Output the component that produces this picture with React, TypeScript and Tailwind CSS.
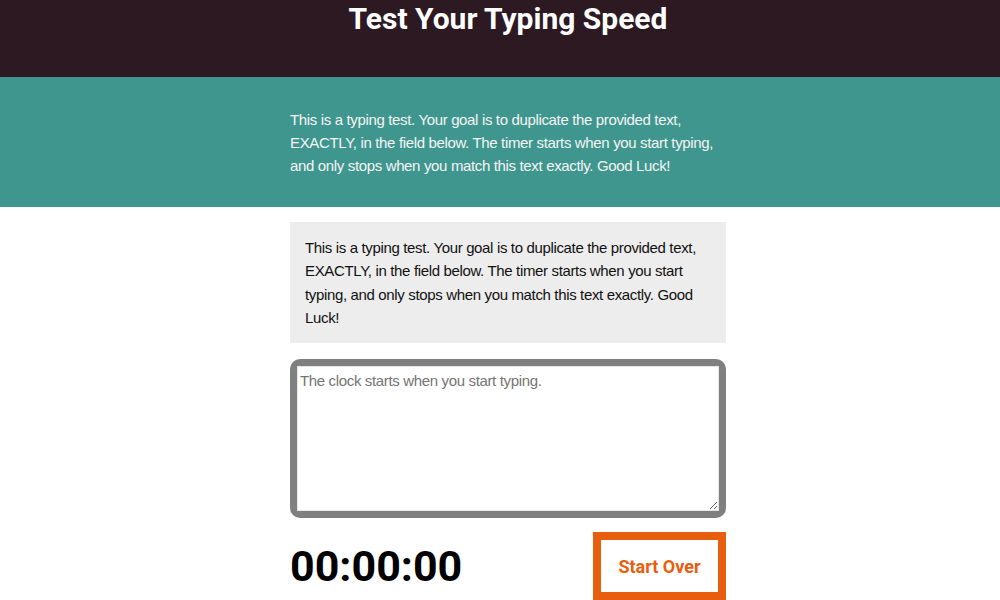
import React, { useState } from 'react';

const PROMPT =
  'This is a typing test. Your goal is to duplicate the provided text, EXACTLY, in the field below. The timer starts when you start typing, and only stops when you match this text exactly. Good Luck!';

const App: React.FC = () => {
  const [value, setValue] = useState('');

  return (
    <div className="min-h-screen bg-white font-[family-name:'Liberation_Sans',Arial,sans-serif] text-[15px] tracking-[-0.35px]">
      {/* Header */}
      <header className="h-[77px] bg-[#2d1922] pl-[16px]">
        <h1 className="pt-[1px] text-center font-[family-name:Roboto,sans-serif] text-[30px] font-bold leading-[36px] tracking-normal text-white">
          Test Your Typing Speed
        </h1>
      </header>

      {/* Intro band */}
      <section className="bg-[#3f968e] py-[30.5px] pl-[16px]">
        <p className="mx-auto w-[436px] leading-[23px] text-[#f4f4f4]">{PROMPT}</p>
      </section>

      <div className="pl-[16px]">
        <main className="mx-auto w-[436px] pt-[15px]">
          <div className="bg-[#ededed] px-[15px] py-[14px] leading-[23.3px] text-[#111]">{PROMPT}</div>

          <div className="mt-[16px] rounded-[10px] bg-[#7f7f7f] p-[7px]">
            <textarea
              value={value}
              onChange={(e) => setValue(e.target.value)}
              placeholder="The clock starts when you start typing."
              className="block h-[145px] w-full resize-y border border-[#e6e6e6] bg-white px-[2px] py-[4px] leading-[20px] text-black outline-none placeholder:text-[#757575]"
            />
          </div>

          <div className="mt-[14px] flex items-center justify-between">
            <div className="font-[family-name:Roboto,sans-serif] text-[43px] font-bold leading-none tracking-normal text-black">00:00:00</div>
            <button
              onClick={() => setValue('')}
              className="h-[68px] w-[133px] border-[8px] border-[#e95d0f] bg-white font-[family-name:Roboto,sans-serif] text-[18px] font-bold tracking-normal text-[#e95d0f]"
            >
              Start Over
            </button>
          </div>
        </main>
      </div>
    </div>
  );
};

export default App;
